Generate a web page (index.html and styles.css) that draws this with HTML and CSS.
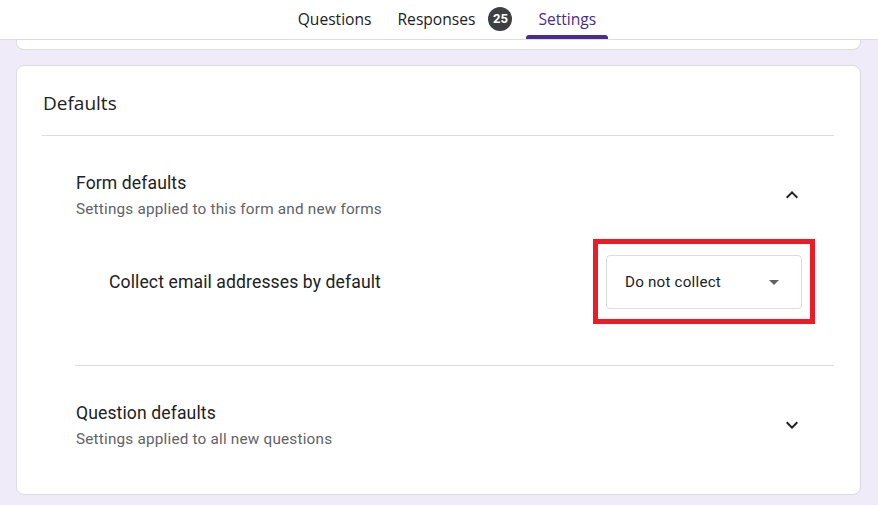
FILE: index.html
```html
<!DOCTYPE html>
<html>
<head>
<meta charset="utf-8">
<link rel="stylesheet" href="styles.css">
</head>
<body>
<header class="topbar">
  <nav class="tabs">
    <div class="tab">Questions</div>
    <div class="tab">Responses<span class="badge">25</span></div>
    <div class="tab active">Settings</div>
  </nav>
</header>
<main class="page">
  <div class="card-prev"></div>
  <section class="card">
    <h2 class="card-title">Defaults</h2>
    <div class="section">
      <div class="section-head">
        <div class="section-text">
          <div class="section-title">Form defaults</div>
          <div class="section-sub">Settings applied to this form and new forms</div>
        </div>
        <svg class="chev" viewBox="0 0 24 24" width="24" height="24"><path d="M12 8l-6 6 1.41 1.41L12 10.83l4.59 4.58L18 14z"/></svg>
      </div>
      <div class="setting-row">
        <div class="setting-label">Collect email addresses by default</div>
        <div class="highlight">
          <div class="select">
            <span class="select-value">Do not collect</span>
            <span class="select-arrow"></span>
          </div>
        </div>
      </div>
    </div>
    <div class="section section-last">
      <div class="section-head">
        <div class="section-text">
          <div class="section-title">Question defaults</div>
          <div class="section-sub">Settings applied to all new questions</div>
        </div>
        <svg class="chev" viewBox="0 0 24 24" width="24" height="24"><path d="M16.59 8.59L12 13.17 7.41 8.59 6 10l6 6 6-6z"/></svg>
      </div>
    </div>
  </section>
</main>
</body>
</html>
```

FILE: styles.css
```css
* { box-sizing: border-box; }
html, body { margin: 0; padding: 0; }
body {
  background: #f0ebf8;
  font-family: Roboto, "Liberation Sans", Arial, sans-serif;
  color: #202124;
  width: 878px;
  height: 505px;
  overflow: hidden;
}
.topbar {
  height: 40px;
  background: #fff;
  border-bottom: 1px solid #dadce0;
}
.tabs {
  display: flex;
  justify-content: center;
  gap: 2px;
  padding-left: 16px;
  height: 39px;
}
.tab {
  position: relative;
  display: flex;
  align-items: center;
  padding: 0 12px 2px;
  font-family: "Open Sans", Roboto, sans-serif;
  font-weight: 500;
  font-size: 15.6px;
  color: #202124;
  height: 39px;
}
.tab.active { color: #4a2c8f; }
.tab.active::after {
  content: "";
  position: absolute;
  left: 0; right: 0; bottom: 0;
  height: 4px;
  background: #4a2c8f;
  border-radius: 3px 3px 0 0;
}
.badge {
  display: inline-flex;
  align-items: center;
  justify-content: center;
  width: 24px;
  height: 24px;
  margin-left: 13px;
  border-radius: 50%;
  background: #3c4043;
  color: #fff;
  font-family: Roboto, sans-serif;
  font-weight: 700;
  font-size: 13px;
}
.page {
  padding: 0 17px 0 16px;
}
.card-prev {
  height: 10px;
  background: #fff;
  border: 1px solid #dadce0;
  border-top: none;
  border-radius: 0 0 8px 8px;
  margin-bottom: 15px;
}
.card {
  background: #fff;
  border: 1px solid #dadce0;
  border-radius: 8px;
  padding: 25px 26px 44px 25px;
}
.card-title {
  margin: 0;
  padding: 0 0 20px 1px;
  font-family: "Open Sans", Roboto, sans-serif;
  font-weight: 400;
  font-size: 19px;
  line-height: 24px;
  color: #202124;
  border-bottom: 1px solid #dadce0;
}
.section {
  margin-left: 33px;
  padding-top: 34px;
  padding-bottom: 41px;
  border-bottom: 1px solid #dadce0;
}
.section-last {
  border-bottom: none;
  padding-bottom: 0;
}
.section-head {
  display: flex;
  align-items: center;
  justify-content: space-between;
  padding-left: 1px;
  padding-right: 30px;
}
.section-title {
  font-size: 17.6px;
  line-height: 26px;
  letter-spacing: 0.1px;
}
.section-sub {
  margin-top: 2px;
  font-size: 15.3px;
  line-height: 22px;
  letter-spacing: 0.2px;
  color: #5f6368;
}
.chev { fill: #202124; display: block; }
.setting-row {
  display: flex;
  align-items: center;
  justify-content: space-between;
  margin-top: 19px;
  padding-left: 34px;
  padding-right: 19px;
}
.setting-label {
  font-size: 17.6px;
  line-height: 26px;
  letter-spacing: 0.1px;
}
.highlight {
  border: 5px solid #ed1c24;
  padding: 11px 8px 10px 8px;
}
.select {
  width: 196px;
  height: 54px;
  border: 1px solid #dadce0;
  border-radius: 4px;
  display: flex;
  align-items: center;
  justify-content: space-between;
  padding: 0 22px 0 18px;
}
.select-value {
  font-size: 15.2px;
  letter-spacing: 0.2px;
  color: #202124;
}
.select-arrow {
  width: 0;
  height: 0;
  border-left: 5px solid transparent;
  border-right: 5px solid transparent;
  border-top: 5px solid #5f6368;
}
```
